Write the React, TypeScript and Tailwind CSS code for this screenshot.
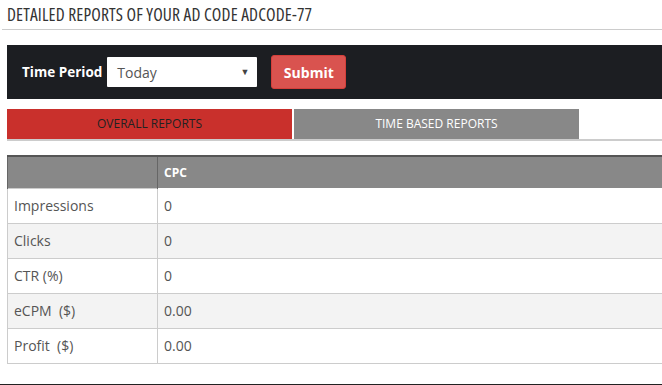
export default function App() {
  const rows = [
    { label: "Impressions", value: "0" },
    { label: "Clicks", value: "0" },
    { label: "CTR (%)", value: "0" },
    { label: "eCPM\u00a0 ($)", value: "0.00" },
    { label: "Profit\u00a0 ($)", value: "0.00" },
  ];

  return (
    <div className="w-[662px] h-[385px] overflow-hidden bg-white pl-[7px] font-['Open_Sans',sans-serif] text-[#555]">
      {/* Heading */}
      <div className="border-b border-[#cccccc] pt-[5px] pb-[6px] -ml-[5px] pl-[5px]">
        <h1 className="text-[17.5px] leading-[18px] text-[#333] font-stretch-condensed tracking-[0.15px]">
          DETAILED REPORTS OF YOUR AD CODE ADCODE-77
        </h1>
      </div>

      {/* Filter bar */}
      <div className="mt-[15px] h-[54px] bg-[#1c1e22] flex items-center pl-[15px]">
        <span className="text-white font-bold text-[13.5px]">Time Period</span>
        <div className="ml-[5px] w-[150px] h-[30px] bg-white flex items-center justify-between pl-[10px] pr-[8px] rounded-[1px]">
          <span className="text-[14px] text-[#555]">Today</span>
          <span className="text-[9px] text-[#444]">▼</span>
        </div>
        <button className="ml-[14px] w-[75px] h-[34px] bg-[#d9534f] border border-[#d43f3a] rounded-[3px] text-white font-bold text-[14px]">
          Submit
        </button>
      </div>

      {/* Tabs */}
      <div className="mt-[10px] flex gap-[2px] border-b-2 border-[#cccccc]">
        <div className="w-[285px] h-[30px] bg-[#c9302c] flex items-center justify-center text-[12px] text-[#222]">
          OVERALL REPORTS
        </div>
        <div className="w-[285px] h-[30px] bg-[#888888] flex items-center justify-center text-[12px] text-white">
          TIME BASED REPORTS
        </div>
      </div>

      {/* Table */}
      <table className="mt-[14px] w-[655px] border-collapse text-[14px]">
        <thead>
          <tr className="bg-[#888888] h-[32px] border-t-2 border-[#555]">
            <th className="w-[150px] border-l border-[#666]" />
            <th className="text-left pl-[6px] text-white font-bold text-[12px] border-l border-[#666]">CPC</th>
          </tr>
        </thead>
        <tbody>
          {rows.map((r, i) => (
            <tr key={r.label} className={`h-[35px] ${i % 2 === 1 ? "bg-[#f3f3f3]" : "bg-white"}`}>
              <td className="border border-[#cccccc] border-r-0 pl-[6px]">{r.label}</td>
              <td className="border-b border-l border-[#cccccc] pl-[6px]">{r.value}</td>
            </tr>
          ))}
        </tbody>
      </table>

      <div className="mt-[20px] border-t-2 border-[#222] -ml-[7px]" />
    </div>
  );
}
